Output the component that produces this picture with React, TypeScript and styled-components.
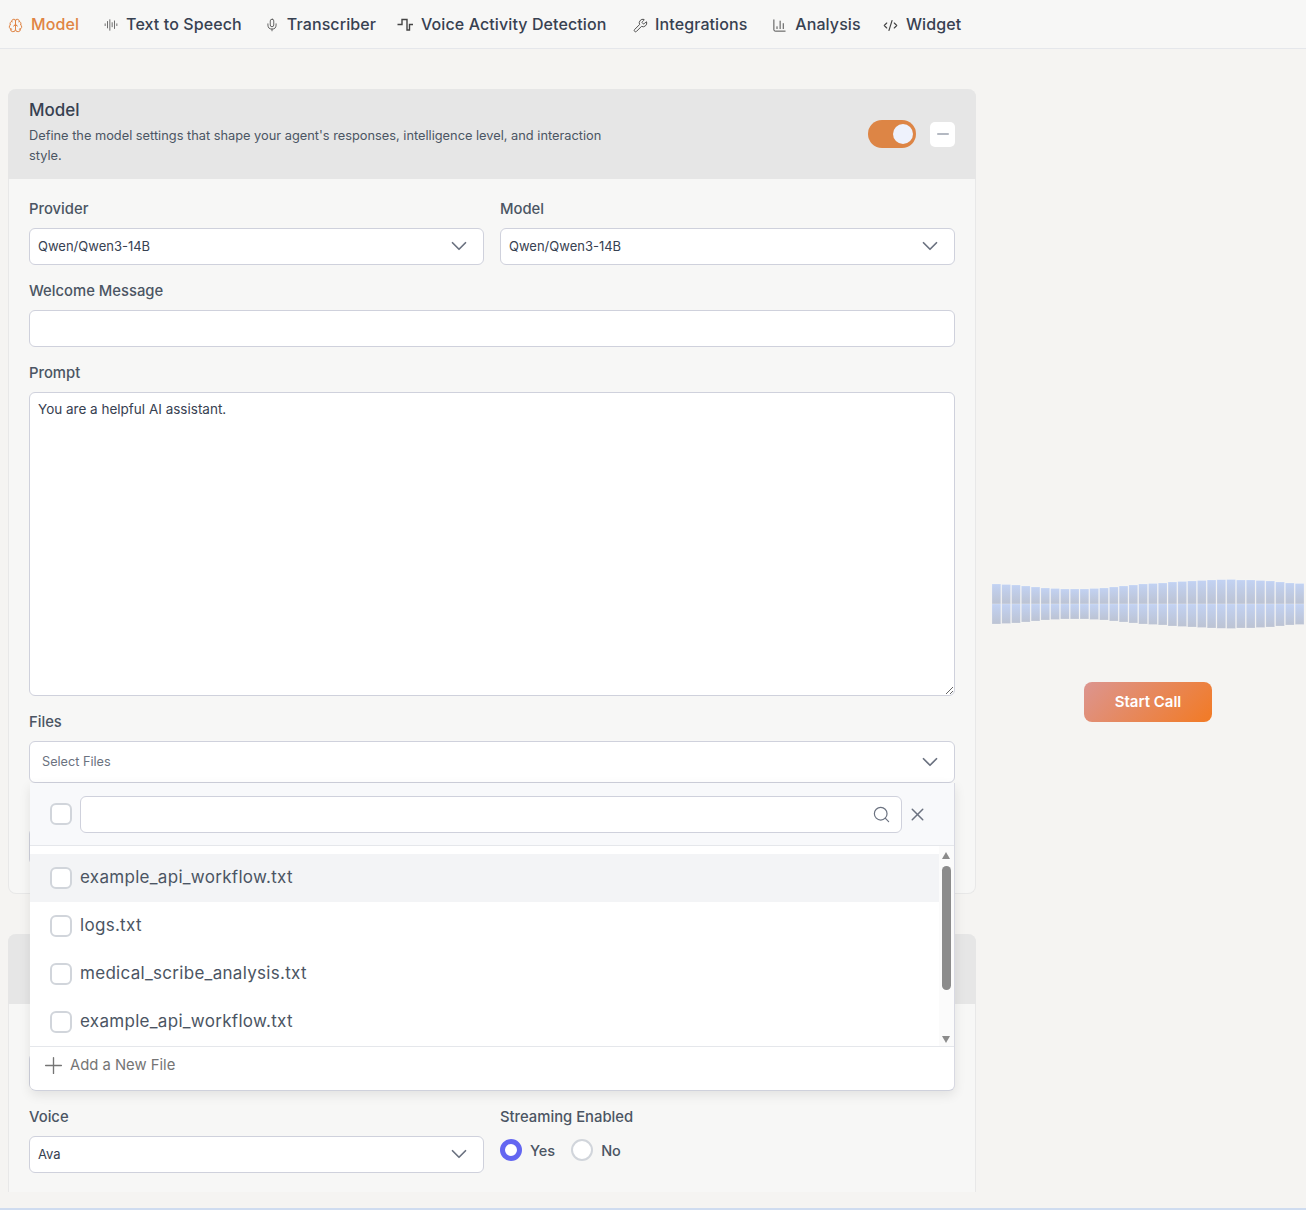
import styled, { createGlobalStyle } from "styled-components"
import { Brain, AudioLines, Mic, Wrench, ChartColumn, CodeXml, ChevronDown, Search, X, Plus, Minus } from "lucide-react"

const GlobalStyle = createGlobalStyle`
  html, body {
    margin: 0;
    padding: 0;
    background: #f5f4f2;
  }
  * {
    box-sizing: border-box;
  }
`

const SquareWave = () => (
  <svg width="16" height="16" viewBox="0 0 16 16" fill="none" stroke="currentColor" strokeWidth="1.4">
    <path d="M0.5 7.5h4.5V2.5h5v10.5h2.5V7.5h3.5" />
  </svg>
)

const waveHeights = [20, 19.5, 19, 18, 17, 16, 15.5, 15, 15, 15, 15.5, 16, 17, 18, 19, 20, 20.5, 21, 22, 22.5, 23, 23.5, 24, 24.3, 24.5, 24, 24, 23.5, 23, 22, 21, 20.5]

const Waveform = () => (
  <svg width="312" height="50" viewBox="0 0 312 50">
    <defs>
      <linearGradient id="waveTop" x1="0" y1="0" x2="0" y2="1">
        <stop offset="0" stopColor="#c2d2f3" />
        <stop offset="1" stopColor="#bcc3d3" />
      </linearGradient>
    </defs>
    {waveHeights.map((h, i) => (
      <g key={i} stroke="#ffffff" strokeOpacity="0.3" strokeWidth="0.6">
        <rect x={i * 9.78} y={25 - h} width={8.8} height={h} fill="url(#waveTop)" />
        <rect x={i * 9.78} y={25} width={8.8} height={h} fill="url(#waveTop)" />
      </g>
    ))}
  </svg>
)

const tabs = [
  { label: "Model", icon: <Brain size={15} strokeWidth={1.6} />, active: true, gap: 8, next: 25 },
  { label: "Text to Speech", icon: <AudioLines size={14} strokeWidth={1.3} />, gap: 8, next: 23.1 },
  { label: "Transcriber", icon: <Mic size={14} strokeWidth={1.4} />, gap: 8, next: 20.9 },
  { label: "Voice Activity Detection", icon: <SquareWave />, gap: 8, next: 26.6 },
  { label: "Integrations", icon: <Wrench size={15} strokeWidth={1.5} />, gap: 7, next: 24.8 },
  { label: "Analysis", icon: <ChartColumn size={15} strokeWidth={1.5} />, gap: 8, next: 22.2 },
  { label: "Widget", icon: <CodeXml size={15} strokeWidth={1.8} />, gap: 8, next: 0 },
]

const files = ["example_api_workflow.txt", "logs.txt", "medical_scribe_analysis.txt", "example_api_workflow.txt"]

export default function App() {
  return (
    <Page>
      <GlobalStyle />
      <Nav>
        {tabs.map((tab) => (
          <Tab key={tab.label} $active={tab.active} $gap={tab.gap} $next={tab.next}>
            <TabIcon $active={tab.active}>{tab.icon}</TabIcon>
            {tab.label}
          </Tab>
        ))}
      </Nav>
      <Main>
        <Column>
          <Card>
            <CardHeader>
              <CardHeading>
                <CardTitle>Model</CardTitle>
                <CardDesc>
                  Define the model settings that shape your agent's responses, intelligence level, and interaction style.
                </CardDesc>
              </CardHeading>
              <HeaderActions>
                <Toggle><Knob /></Toggle>
                <CollapseButton><Minus size={18} strokeWidth={2} /></CollapseButton>
              </HeaderActions>
            </CardHeader>
            <CardBody>
              <FieldRow>
                <Field>
                  <Label>Provider</Label>
                  <Select>Qwen/Qwen3-14B<ChevronDown size={26} strokeWidth={1.6} /></Select>
                </Field>
                <Field>
                  <Label>Model</Label>
                  <Select>Qwen/Qwen3-14B<ChevronDown size={26} strokeWidth={1.6} /></Select>
                </Field>
              </FieldRow>
              <Field>
                <Label>Welcome Message</Label>
                <Input readOnly value="" />
              </Field>
              <Field>
                <Label>Prompt</Label>
                <Prompt readOnly defaultValue="You are a helpful AI assistant." />
              </Field>
              <FilesField>
                <Label>Files</Label>
                <FilesSelect>Select Files<ChevronDown size={26} strokeWidth={1.6} /></FilesSelect>
                <Dropdown>
                  <DropdownHead>
                    <Checkbox />
                    <SearchBox>
                      <Search size={19} strokeWidth={1.5} />
                    </SearchBox>
                    <CloseIcon><X size={21} strokeWidth={1.7} /></CloseIcon>
                  </DropdownHead>
                  <DropdownList>
                    <FileItems>
                      {files.map((name, i) => (
                        <FileItem key={i} $active={i === 0}>
                          <Checkbox />
                          <FileName>{name}</FileName>
                        </FileItem>
                      ))}
                    </FileItems>
                    <ScrollTrack>
                      <ArrowUp />
                      <ScrollThumb />
                      <ArrowDown />
                    </ScrollTrack>
                  </DropdownList>
                  <DropdownFoot>
                    <Plus size={27} strokeWidth={1.2} />
                    Add a New File
                  </DropdownFoot>
                </Dropdown>
              </FilesField>
              <Field>
                <Label />
                <Input readOnly value="" />
              </Field>
            </CardBody>
          </Card>
          <Card>
            <CompactHeader>
              <CardHeading />
              <HeaderActions>
                <Toggle><Knob /></Toggle>
                <CollapseButton><Minus size={18} strokeWidth={2} /></CollapseButton>
              </HeaderActions>
            </CompactHeader>
            <CardBody>
              <FieldRow>
                <Field>
                  <Label />
                  <Input readOnly value="" />
                </Field>
                <Field>
                  <Label />
                  <Input readOnly value="" />
                </Field>
              </FieldRow>
              <VoiceRow>
                <Field>
                  <Label>Voice</Label>
                  <Select>Ava<ChevronDown size={26} strokeWidth={1.6} /></Select>
                </Field>
                <Field>
                  <Label>Streaming Enabled</Label>
                  <RadioRow>
                    <RadioOption><Radio $checked />Yes</RadioOption>
                    <RadioOption><Radio />No</RadioOption>
                  </RadioRow>
                </Field>
              </VoiceRow>
            </CardBody>
          </Card>
        </Column>
        <Aside>
          <Waveform />
          <StartCall>Start Call</StartCall>
        </Aside>
      </Main>
      <BottomEdge />
    </Page>
  )
}

const Page = styled.div`
  width: 1306px;
  height: 1210px;
  display: flex;
  flex-direction: column;
  overflow: hidden;
  background: #f5f4f2;
  font-family: Inter, "Noto Sans", sans-serif;
  color: #4b5563;
`

const Nav = styled.nav`
  height: 49px;
  flex: none;
  display: flex;
  align-items: center;
  padding: 0 0 1px 8px;
  background: #f7f7f6;
  border-bottom: 1px solid #e5e7eb;
`

const Tab = styled.div<{ $active?: boolean; $gap: number; $next: number }>`
  display: flex;
  align-items: center;
  gap: ${(p) => p.$gap}px;
  margin-right: ${(p) => p.$next}px;
  font-size: 16px;
  font-weight: 500;
  letter-spacing: 0.1px;
  white-space: nowrap;
  color: ${(p) => (p.$active ? "#e08443" : "#374151")};
`

const TabIcon = styled.span<{ $active?: boolean }>`
  display: flex;
  margin-top: 3px;
  color: ${(p) => (p.$active ? "#e08443" : "#444")};
`

const Main = styled.main`
  height: 1143px;
  flex: none;
  display: flex;
  overflow: hidden;
`

const Column = styled.div`
  width: 976px;
  flex: none;
  display: flex;
  flex-direction: column;
  gap: 40px;
  padding: 40px 0 0 8px;
`

const Card = styled.section`
  flex: none;
  background: #f7f7f6;
  border: 1px solid #e8e8e8;
  border-top: none;
  border-radius: 8px;
`

const CardHeader = styled.header`
  height: 90px;
  display: flex;
  justify-content: space-between;
  align-items: center;
  padding: 0 21px;
  background: #e6e6e6;
  border-radius: 8px 8px 0 0;
  margin: 0 -1px;
`

const CompactHeader = styled(CardHeader)`
  height: 70px;
`

const CardHeading = styled.div`
  width: 590px;
  margin-top: -4px;
`

const CardTitle = styled.h2`
  margin: 0 0 5px;
  font-size: 17px;
  line-height: 22px;
  font-weight: 500;
  color: #374151;
`

const CardDesc = styled.p`
  margin: 0;
  font-size: 12.8px;
  line-height: 20px;
  color: #4b5563;
`

const HeaderActions = styled.div`
  display: flex;
  align-items: center;
  gap: 14px;
`

const Toggle = styled.div`
  width: 48px;
  height: 28px;
  display: flex;
  align-items: center;
  justify-content: flex-end;
  padding-right: 3px;
  border-radius: 14px;
  background: #dd8545;
`

const Knob = styled.span`
  width: 20px;
  height: 20px;
  border-radius: 50%;
  background: #eef2fc;
`

const CollapseButton = styled.div`
  width: 25px;
  height: 25px;
  display: flex;
  align-items: center;
  justify-content: center;
  border-radius: 5px;
  background: #fff;
  color: #9ca3af;
`

const CardBody = styled.div`
  display: flex;
  flex-direction: column;
  gap: 16px;
  padding: 20px 20px 28px;
`

const FieldRow = styled.div`
  display: grid;
  grid-template-columns: 1fr 1fr;
  gap: 16px;
`

const VoiceRow = styled(FieldRow)`
  margin-top: 1px;
`

const Field = styled.div`
  display: flex;
  flex-direction: column;
  gap: 9px;
`

const FilesField = styled(Field)`
  position: relative;
`

const Label = styled.label`
  min-height: 20px;
  font-size: 14.8px;
  line-height: 20px;
  font-weight: 500;
  color: #4b5563;
`

const Select = styled.div`
  height: 37px;
  display: flex;
  align-items: center;
  justify-content: space-between;
  padding: 0 11px 1px 8px;
  background: #fff;
  border: 1px solid #cfd1dc;
  border-radius: 6px;
  font-size: 13px;
  color: #374151;
  svg {
    color: #6b7280;
  }
`

const FilesSelect = styled(Select)`
  height: 42px;
  padding-left: 12px;
  font-size: 12.7px;
  color: #6b7280;
`

const Input = styled.input`
  height: 37px;
  padding: 0 8px;
  background: #fff;
  border: 1px solid #cfd1dc;
  border-radius: 6px;
  outline: none;
`

const Prompt = styled.textarea`
  display: block;
  height: 304px;
  padding: 7px 8px;
  background: #fff;
  border: 1px solid #cfd1dc;
  border-radius: 6px;
  outline: none;
  font-family: inherit;
  font-size: 13.5px;
  line-height: 18px;
  color: #374151;
`

const Dropdown = styled.div`
  position: absolute;
  top: 71px;
  left: 1px;
  right: 0;
  z-index: 5;
  height: 308px;
  display: flex;
  flex-direction: column;
  background: #fff;
  border-radius: 0 0 6px 6px;
  border-bottom: 1px solid #cfd1dc;
  border-right: 1px solid #d8d9e2;
  box-shadow: 0 4px 12px rgba(0, 0, 0, 0.09);
`

const DropdownHead = styled.div`
  height: 63px;
  flex: none;
  display: flex;
  align-items: center;
  padding: 0 20px;
  gap: 8px;
  background: #f8f9fb;
  border-bottom: 1px solid #e5e7eb;
`

const Checkbox = styled.span`
  width: 22px;
  height: 22px;
  flex: none;
  background: #fff;
  border: 2px solid #d1d5db;
  border-radius: 6px;
`

const SearchBox = styled.div`
  flex: 1;
  height: 37px;
  display: flex;
  align-items: center;
  justify-content: flex-end;
  padding-right: 10px;
  background: #fff;
  border: 1px solid #cfd1dc;
  border-radius: 6px;
  color: #6b7280;
`

const CloseIcon = styled.span`
  display: flex;
  margin: 0 6px 0 -3px;
  color: #6b7280;
`

const DropdownList = styled.div`
  height: 200px;
  flex: none;
  display: flex;
`

const FileItems = styled.div`
  flex: 1;
  padding-top: 8px;
`

const FileItem = styled.div<{ $active?: boolean }>`
  height: 48px;
  display: flex;
  align-items: center;
  gap: 8px;
  padding-left: 20px;
  font-size: 17px;
  letter-spacing: 0.3px;
  color: #4b5563;
  background: ${(p) => (p.$active ? "#f3f4f6" : "#fff")};
`

const FileName = styled.span`
  margin-top: -2px;
`

const ScrollTrack = styled.div`
  width: 15px;
  flex: none;
  display: flex;
  flex-direction: column;
  align-items: center;
  padding: 6px 1px 3px 0;
  background: #fbfbfb;
`

const ArrowUp = styled.span`
  border-left: 4.5px solid transparent;
  border-right: 4.5px solid transparent;
  border-bottom: 7px solid #8b8b8b;
`

const ArrowDown = styled.span`
  margin-top: auto;
  border-left: 4.5px solid transparent;
  border-right: 4.5px solid transparent;
  border-top: 7px solid #8b8b8b;
`

const ScrollThumb = styled.span`
  width: 9px;
  height: 124px;
  margin-top: 7px;
  border-radius: 5px;
  background: #8b8b8b;
`

const DropdownFoot = styled.div`
  flex: 1;
  display: flex;
  align-items: center;
  gap: 3px;
  padding: 0 0 7px 10px;
  border-top: 1px solid #e5e7eb;
  font-size: 14.8px;
  color: #757575;
`

const RadioRow = styled.div`
  display: flex;
  gap: 16px;
  margin-top: -5px;
  padding-top: 8px;
`

const RadioOption = styled.div`
  display: flex;
  align-items: center;
  gap: 8px;
  font-size: 14.5px;
  font-weight: 500;
  color: #4b5563;
`

const Radio = styled.span<{ $checked?: boolean }>`
  width: 22px;
  height: 22px;
  border-radius: 50%;
  background: #fff;
  border: ${(p) => (p.$checked ? "5px solid #6366f1" : "2px solid #d1d5db")};
`

const Aside = styled.aside`
  flex: 1;
  display: flex;
  flex-direction: column;
  align-items: center;
  gap: 53px;
  padding: 530px 0 0 14px;
`

const StartCall = styled.button`
  width: 128px;
  height: 40px;
  padding: 0 0 2px;
  border: none;
  border-radius: 8px;
  background: linear-gradient(135deg, #dc9590, #f27a24);
  font-family: inherit;
  font-size: 15px;
  font-weight: 600;
  color: #fff;
`

const BottomEdge = styled.div`
  margin-top: auto;
  height: 2px;
  background: #cfdcf0;
`
